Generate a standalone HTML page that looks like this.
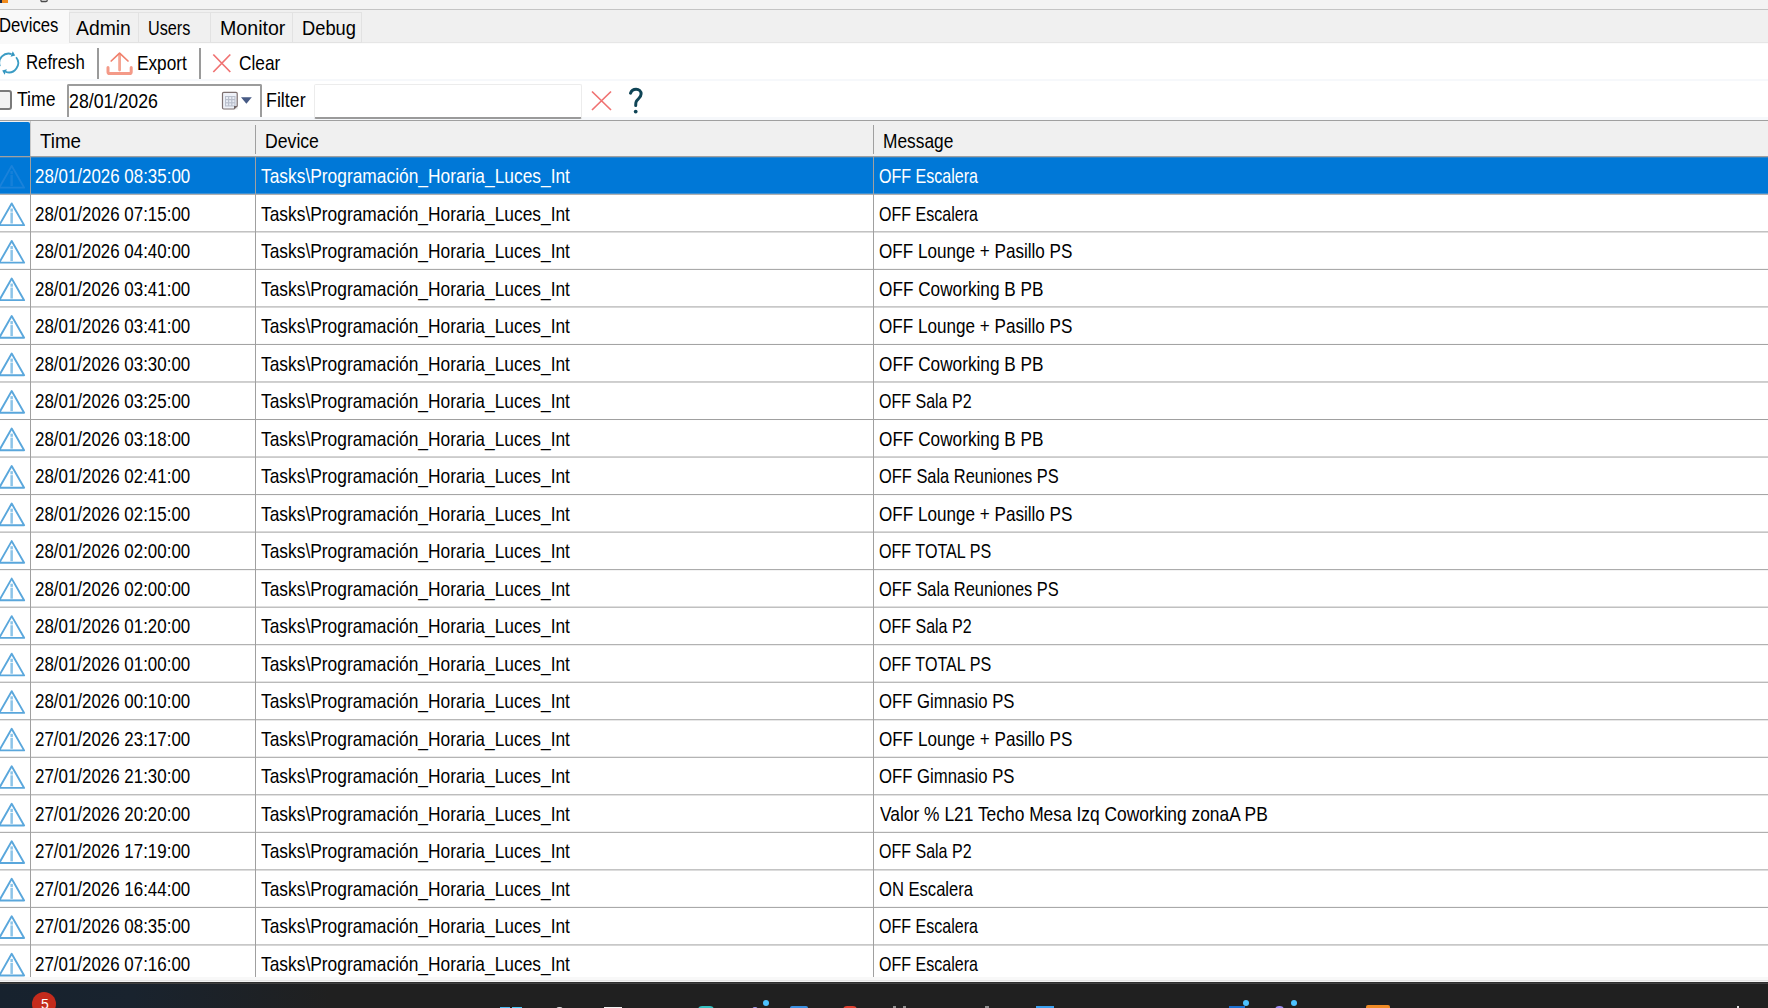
<!DOCTYPE html>
<html><head><meta charset="utf-8"><style>
html,body{margin:0;padding:0;width:1768px;height:1008px;overflow:hidden;background:#fff;position:relative}
.t{position:absolute;font-family:"Liberation Sans",sans-serif;font-size:19px;line-height:30px;white-space:pre;transform-origin:0 0}
</style></head><body>
<div style="position:absolute;left:0px;top:0px;width:1768px;height:9px;background:#f3f3f3;"></div>
<div style="position:absolute;left:0px;top:0px;width:2px;height:3px;background:#1c2840;"></div>
<div style="position:absolute;left:2px;top:0px;width:6px;height:3px;background:#f08a1c;"></div>
<svg style="position:absolute;left:0;top:0" width="60" height="6" viewBox="0 0 60 6"><path d="M40.9,-3 L40.9,0.2 Q40.9,1.5 42.2,1.5 L45.9,1.5 Q47.2,1.5 47.2,0.2 L47.2,-3" fill="none" stroke="#4a4a4a" stroke-width="1.3"/></svg>
<div style="position:absolute;left:0px;top:9px;width:1768px;height:1px;background:#c4c4c4;"></div>
<div style="position:absolute;left:0px;top:10px;width:1768px;height:33px;background:#f0f0f0;"></div>
<div style="position:absolute;left:0px;top:42px;width:1768px;height:1px;background:#e6e6e6;"></div>
<div style="position:absolute;left:0px;top:43px;width:1768px;height:1px;background:#fbfbfb;"></div>
<div style="position:absolute;left:0px;top:10px;width:69px;height:34px;background:#f9f9f9;"></div>
<div style="position:absolute;left:69px;top:12px;width:68px;height:29px;border:1px solid #e2e2e2;background:#f0f0f0"></div>
<div style="position:absolute;left:138px;top:12px;width:71px;height:29px;border:1px solid #e2e2e2;background:#f0f0f0"></div>
<div style="position:absolute;left:210px;top:12px;width:81px;height:29px;border:1px solid #e2e2e2;background:#f0f0f0"></div>
<div style="position:absolute;left:292px;top:12px;width:68px;height:29px;border:1px solid #e2e2e2;background:#f0f0f0"></div>
<div style="position:absolute;left:0px;top:44px;width:1768px;height:76px;background:#ffffff;"></div>
<div style="position:absolute;left:0px;top:79px;width:1768px;height:2px;background:#f6f8fb;"></div>
<div style="position:absolute;left:0px;top:117px;width:1768px;height:3px;background:#f6f8fb;"></div>
<div style="position:absolute;left:0px;top:120px;width:1768px;height:1px;background:#a0a0a0;"></div>
<div class="t" style="left:-0.88px;top:8.98px;color:#000;transform:scale(0.8788,1.077)">Devices</div>
<div class="t" style="left:76.00px;top:11.98px;color:#000;transform:scale(1.0189,1.077)">Admin</div>
<div class="t" style="left:148.15px;top:11.98px;color:#000;transform:scale(0.8542,1.077)">Users</div>
<div class="t" style="left:219.97px;top:11.98px;color:#000;transform:scale(1.0323,1.077)">Monitor</div>
<div class="t" style="left:302.04px;top:11.98px;color:#000;transform:scale(0.9630,1.077)">Debug</div>
<div class="t" style="left:26.12px;top:45.98px;color:#000;transform:scale(0.8831,1.077)">Refresh</div>
<div class="t" style="left:137.09px;top:46.98px;color:#000;transform:scale(0.9074,1.077)">Export</div>
<div class="t" style="left:239.09px;top:46.98px;color:#000;transform:scale(0.9091,1.077)">Clear</div>
<div style="position:absolute;left:97px;top:48px;width:2px;height:31px;background:#9a9a9a;"></div>
<div style="position:absolute;left:199px;top:48px;width:2px;height:31px;background:#9a9a9a;"></div>
<svg style="position:absolute;left:0;top:0" width="30" height="90" viewBox="0 0 30 90">
<path d="M-0.13,66.21 A9.4,9.4 0 0 1 11.60,54.06" fill="none" stroke="#3a9cc4" stroke-width="1.8"/>
<path d="M16.11,57.21 A9.4,9.4 0 0 1 5.80,71.94" fill="none" stroke="#3a9cc4" stroke-width="1.8"/>
<path d="M15.19,55.48 L12.79,51.28 L10.54,56.84 Z" fill="#3496c0"/>
<path d="M2.21,70.52 L4.61,74.72 L6.86,69.16 Z" fill="#3496c0"/>
</svg>
<svg style="position:absolute;left:100px;top:45px" width="40" height="35" viewBox="100 45 40 35">
<path d="M119.6,70 L119.6,54.5" stroke="#f4a594" stroke-width="2.8" stroke-linecap="round" fill="none"/>
<path d="M111.2,61 L119.6,53.2 L128,61" stroke="#f0806c" stroke-width="1.7" stroke-linecap="round" stroke-linejoin="round" fill="none"/>
<path d="M108,67.5 L108,72 Q108,73.6 109.6,73.6 L129.6,73.6 Q131.2,73.6 131.2,72 L131.2,67.5" stroke="#f49a88" stroke-width="3" stroke-linecap="round" fill="none"/>
</svg>
<svg style="position:absolute;left:205px;top:48px" width="35" height="32" viewBox="205 48 35 32">
<path d="M213.3,54.5 L230.3,72 M230.3,54.5 L213.3,72" stroke="#f07272" stroke-width="1.7" fill="none"/>
</svg>
<div style="position:absolute;left:-8px;top:90px;width:16px;height:16px;border:2px solid #7a7a7a;border-radius:3px;background:#f2f2f2"></div>
<div class="t" style="left:17.00px;top:82.98px;color:#000;transform:scale(0.9268,1.077)">Time</div>
<div style="position:absolute;left:67px;top:84px;width:191px;height:31px;border:2px solid #9c9c9c;border-bottom:none;border-radius:2px 2px 0 0;background:#fff"></div>
<div class="t" style="left:69.06px;top:84.98px;color:#000;transform:scale(0.9355,1.077)">28/01/2026</div>
<svg style="position:absolute;left:215px;top:84px" width="45" height="34" viewBox="215 84 45 34">
<rect x="223" y="93.5" width="15" height="16" rx="1.5" fill="#c8c8c8" opacity="0.35"/>
<path d="M222.5,93.5 Q222.5,92.3 223.7,92.3 L236,92.3 Q237.2,92.3 237.2,93.5 L237.2,106 L234,109 L223.7,109 Q222.5,109 222.5,107.8 Z" fill="#eef1f8" stroke="#7d7070" stroke-width="1.2"/>
<rect x="225" y="96" width="10.5" height="10.5" fill="#b9bfcc"/>
<g fill="#e8ecf4">
<rect x="226" y="97" width="2" height="2"/><rect x="229.2" y="97" width="2" height="2"/><rect x="232.4" y="97" width="2" height="2"/>
<rect x="226" y="100.2" width="2" height="2"/><rect x="229.2" y="100.2" width="2" height="2"/><rect x="232.4" y="100.2" width="2" height="2"/>
<rect x="226" y="103.4" width="2" height="2"/><rect x="229.2" y="103.4" width="2" height="2"/><rect x="232.4" y="103.4" width="2" height="2"/>
</g>
<path d="M234,109 L237.2,106 L234,106 Z" fill="#6f6666"/>
<path d="M241,97.3 L251.8,97.3 L246.4,103.8 Z" fill="#465a85"/>
</svg>
<div class="t" style="left:266.06px;top:83.98px;color:#000;transform:scale(0.9390,1.077)">Filter</div>
<div style="position:absolute;left:314px;top:84px;width:266px;height:32px;border:1px solid #ececec;border-bottom:2px solid #9a9a9a;border-radius:2px;background:#fff"></div>
<svg style="position:absolute;left:585px;top:82px" width="70" height="36" viewBox="585 82 70 36">
<path d="M592,91.5 L611,110 M611,91.5 L592,110" stroke="#f07272" stroke-width="1.7" fill="none"/>
<path d="M630.5,93.2 C631.4,90.6 633.6,89.3 636.1,89.3 C639,89.3 641.1,91.4 641.1,94.1 C641.1,97.6 637.6,99 636.3,101.4 C635.8,102.4 635.7,103.8 635.7,105.4" stroke="#0f4456" stroke-width="3" stroke-linecap="round" fill="none"/>
<circle cx="635.7" cy="111.6" r="1.9" fill="#0f4456"/>
</svg>
<div style="position:absolute;left:0px;top:121px;width:1768px;height:35px;background:#f0f0f0;"></div>
<div style="position:absolute;left:0;top:122px;width:30px;height:34px;background:#0078d7;border-top-right-radius:2px"></div>
<div style="position:absolute;left:30px;top:121px;width:1px;height:35px;background:#c8c8c8;"></div>
<div style="position:absolute;left:255px;top:125px;width:1px;height:29px;background:#a0a0a0;"></div>
<div style="position:absolute;left:873px;top:125px;width:1px;height:29px;background:#a0a0a0;"></div>
<div style="position:absolute;left:0px;top:156px;width:1768px;height:1px;background:#a0a0a0;"></div>
<div class="t" style="left:40.00px;top:124.98px;color:#000;transform:scale(0.9878,1.077)">Time</div>
<div class="t" style="left:265.07px;top:124.98px;color:#000;transform:scale(0.9286,1.077)">Device</div>
<div class="t" style="left:883.09px;top:124.98px;color:#000;transform:scale(0.9133,1.077)">Message</div>
<div style="position:absolute;left:0px;top:157px;width:1768px;height:1px;background:#a0a0a0;"></div>
<svg style="position:absolute;left:0;top:0" width="1768" height="1008" viewBox="0 0 1768 1008">
<rect x="0" y="157.3" width="1768" height="36.53" fill="#0078d7"/>
<rect x="0" y="193.83" width="1768" height="1" fill="#a0a0a0"/>
<rect x="0" y="231.36" width="1768" height="1" fill="#a0a0a0"/>
<rect x="0" y="268.89" width="1768" height="1" fill="#a0a0a0"/>
<rect x="0" y="306.42" width="1768" height="1" fill="#a0a0a0"/>
<rect x="0" y="343.95" width="1768" height="1" fill="#a0a0a0"/>
<rect x="0" y="381.48" width="1768" height="1" fill="#a0a0a0"/>
<rect x="0" y="419.01" width="1768" height="1" fill="#a0a0a0"/>
<rect x="0" y="456.54" width="1768" height="1" fill="#a0a0a0"/>
<rect x="0" y="494.07" width="1768" height="1" fill="#a0a0a0"/>
<rect x="0" y="531.60" width="1768" height="1" fill="#a0a0a0"/>
<rect x="0" y="569.13" width="1768" height="1" fill="#a0a0a0"/>
<rect x="0" y="606.66" width="1768" height="1" fill="#a0a0a0"/>
<rect x="0" y="644.19" width="1768" height="1" fill="#a0a0a0"/>
<rect x="0" y="681.72" width="1768" height="1" fill="#a0a0a0"/>
<rect x="0" y="719.25" width="1768" height="1" fill="#a0a0a0"/>
<rect x="0" y="756.78" width="1768" height="1" fill="#a0a0a0"/>
<rect x="0" y="794.31" width="1768" height="1" fill="#a0a0a0"/>
<rect x="0" y="831.84" width="1768" height="1" fill="#a0a0a0"/>
<rect x="0" y="869.37" width="1768" height="1" fill="#a0a0a0"/>
<rect x="0" y="906.90" width="1768" height="1" fill="#a0a0a0"/>
<rect x="0" y="944.43" width="1768" height="1" fill="#a0a0a0"/>
</svg>
<div style="position:absolute;left:30px;top:157px;width:1px;height:820px;background:#a0a0a0;"></div>
<div style="position:absolute;left:255px;top:157px;width:1px;height:820px;background:#a0a0a0;"></div>
<div style="position:absolute;left:873px;top:157px;width:1px;height:820px;background:#a0a0a0;"></div>
<svg style="position:absolute;left:0;top:0;overflow:visible" width="1" height="1" viewBox="0 0 1 1">
<g transform="translate(0,157.00)">
<path d="M11.7,8.9 L24.1,30.6 L-0.7,30.6 Z" fill="none" stroke="#1a82da" stroke-width="1.9" stroke-linejoin="round"/>
<rect x="10.4" y="14" width="2.5" height="3.2" fill="#1580d9"/><rect x="10.4" y="18" width="2.5" height="11" fill="#1580d9"/>
</g></svg>
<div class="t" style="left:35.11px;top:159.98px;color:#fff;transform:scale(0.8902,1.077)">28/01/2026 08:35:00</div>
<div class="t" style="left:261.00px;top:159.98px;color:#fff;transform:scale(0.9142,1.077)">Tasks\Programación_Horaria_Luces_Int</div>
<div class="t" style="left:879.16px;top:159.98px;color:#fff;transform:scale(0.8448,1.077)">OFF Escalera</div>
<svg style="position:absolute;left:0;top:0;overflow:visible" width="1" height="1" viewBox="0 0 1 1">
<g transform="translate(0,194.52)">
<path d="M11.7,8.9 L24.1,30.6 L-0.7,30.6 Z" fill="none" stroke="#5aa7dc" stroke-width="1.9" stroke-linejoin="round"/>
<rect x="10.4" y="14" width="2.5" height="3.2" fill="#8cc4e8"/><rect x="10.4" y="18" width="2.5" height="11" fill="#8cc4e8"/>
</g></svg>
<div class="t" style="left:35.11px;top:197.98px;color:#000;transform:scale(0.8902,1.077)">28/01/2026 07:15:00</div>
<div class="t" style="left:261.00px;top:197.98px;color:#000;transform:scale(0.9142,1.077)">Tasks\Programación_Horaria_Luces_Int</div>
<div class="t" style="left:879.16px;top:197.98px;color:#000;transform:scale(0.8448,1.077)">OFF Escalera</div>
<svg style="position:absolute;left:0;top:0;overflow:visible" width="1" height="1" viewBox="0 0 1 1">
<g transform="translate(0,232.04)">
<path d="M11.7,8.9 L24.1,30.6 L-0.7,30.6 Z" fill="none" stroke="#5aa7dc" stroke-width="1.9" stroke-linejoin="round"/>
<rect x="10.4" y="14" width="2.5" height="3.2" fill="#8cc4e8"/><rect x="10.4" y="18" width="2.5" height="11" fill="#8cc4e8"/>
</g></svg>
<div class="t" style="left:35.11px;top:234.98px;color:#000;transform:scale(0.8902,1.077)">28/01/2026 04:40:00</div>
<div class="t" style="left:261.00px;top:234.98px;color:#000;transform:scale(0.9142,1.077)">Tasks\Programación_Horaria_Luces_Int</div>
<div class="t" style="left:879.10px;top:234.98px;color:#000;transform:scale(0.9000,1.077)">OFF Lounge + Pasillo PS</div>
<svg style="position:absolute;left:0;top:0;overflow:visible" width="1" height="1" viewBox="0 0 1 1">
<g transform="translate(0,269.56)">
<path d="M11.7,8.9 L24.1,30.6 L-0.7,30.6 Z" fill="none" stroke="#5aa7dc" stroke-width="1.9" stroke-linejoin="round"/>
<rect x="10.4" y="14" width="2.5" height="3.2" fill="#8cc4e8"/><rect x="10.4" y="18" width="2.5" height="11" fill="#8cc4e8"/>
</g></svg>
<div class="t" style="left:35.11px;top:272.98px;color:#000;transform:scale(0.8902,1.077)">28/01/2026 03:41:00</div>
<div class="t" style="left:261.00px;top:272.98px;color:#000;transform:scale(0.9142,1.077)">Tasks\Programación_Horaria_Luces_Int</div>
<div class="t" style="left:879.09px;top:272.98px;color:#000;transform:scale(0.9056,1.077)">OFF Coworking B PB</div>
<svg style="position:absolute;left:0;top:0;overflow:visible" width="1" height="1" viewBox="0 0 1 1">
<g transform="translate(0,307.08)">
<path d="M11.7,8.9 L24.1,30.6 L-0.7,30.6 Z" fill="none" stroke="#5aa7dc" stroke-width="1.9" stroke-linejoin="round"/>
<rect x="10.4" y="14" width="2.5" height="3.2" fill="#8cc4e8"/><rect x="10.4" y="18" width="2.5" height="11" fill="#8cc4e8"/>
</g></svg>
<div class="t" style="left:35.11px;top:309.98px;color:#000;transform:scale(0.8902,1.077)">28/01/2026 03:41:00</div>
<div class="t" style="left:261.00px;top:309.98px;color:#000;transform:scale(0.9142,1.077)">Tasks\Programación_Horaria_Luces_Int</div>
<div class="t" style="left:879.10px;top:309.98px;color:#000;transform:scale(0.9000,1.077)">OFF Lounge + Pasillo PS</div>
<svg style="position:absolute;left:0;top:0;overflow:visible" width="1" height="1" viewBox="0 0 1 1">
<g transform="translate(0,344.60)">
<path d="M11.7,8.9 L24.1,30.6 L-0.7,30.6 Z" fill="none" stroke="#5aa7dc" stroke-width="1.9" stroke-linejoin="round"/>
<rect x="10.4" y="14" width="2.5" height="3.2" fill="#8cc4e8"/><rect x="10.4" y="18" width="2.5" height="11" fill="#8cc4e8"/>
</g></svg>
<div class="t" style="left:35.11px;top:347.98px;color:#000;transform:scale(0.8902,1.077)">28/01/2026 03:30:00</div>
<div class="t" style="left:261.00px;top:347.98px;color:#000;transform:scale(0.9142,1.077)">Tasks\Programación_Horaria_Luces_Int</div>
<div class="t" style="left:879.09px;top:347.98px;color:#000;transform:scale(0.9056,1.077)">OFF Coworking B PB</div>
<svg style="position:absolute;left:0;top:0;overflow:visible" width="1" height="1" viewBox="0 0 1 1">
<g transform="translate(0,382.12)">
<path d="M11.7,8.9 L24.1,30.6 L-0.7,30.6 Z" fill="none" stroke="#5aa7dc" stroke-width="1.9" stroke-linejoin="round"/>
<rect x="10.4" y="14" width="2.5" height="3.2" fill="#8cc4e8"/><rect x="10.4" y="18" width="2.5" height="11" fill="#8cc4e8"/>
</g></svg>
<div class="t" style="left:35.11px;top:384.98px;color:#000;transform:scale(0.8902,1.077)">28/01/2026 03:25:00</div>
<div class="t" style="left:261.00px;top:384.98px;color:#000;transform:scale(0.9142,1.077)">Tasks\Programación_Horaria_Luces_Int</div>
<div class="t" style="left:879.16px;top:384.98px;color:#000;transform:scale(0.8426,1.077)">OFF Sala P2</div>
<svg style="position:absolute;left:0;top:0;overflow:visible" width="1" height="1" viewBox="0 0 1 1">
<g transform="translate(0,419.64)">
<path d="M11.7,8.9 L24.1,30.6 L-0.7,30.6 Z" fill="none" stroke="#5aa7dc" stroke-width="1.9" stroke-linejoin="round"/>
<rect x="10.4" y="14" width="2.5" height="3.2" fill="#8cc4e8"/><rect x="10.4" y="18" width="2.5" height="11" fill="#8cc4e8"/>
</g></svg>
<div class="t" style="left:35.11px;top:422.98px;color:#000;transform:scale(0.8902,1.077)">28/01/2026 03:18:00</div>
<div class="t" style="left:261.00px;top:422.98px;color:#000;transform:scale(0.9142,1.077)">Tasks\Programación_Horaria_Luces_Int</div>
<div class="t" style="left:879.09px;top:422.98px;color:#000;transform:scale(0.9056,1.077)">OFF Coworking B PB</div>
<svg style="position:absolute;left:0;top:0;overflow:visible" width="1" height="1" viewBox="0 0 1 1">
<g transform="translate(0,457.16)">
<path d="M11.7,8.9 L24.1,30.6 L-0.7,30.6 Z" fill="none" stroke="#5aa7dc" stroke-width="1.9" stroke-linejoin="round"/>
<rect x="10.4" y="14" width="2.5" height="3.2" fill="#8cc4e8"/><rect x="10.4" y="18" width="2.5" height="11" fill="#8cc4e8"/>
</g></svg>
<div class="t" style="left:35.11px;top:459.98px;color:#000;transform:scale(0.8902,1.077)">28/01/2026 02:41:00</div>
<div class="t" style="left:261.00px;top:459.98px;color:#000;transform:scale(0.9142,1.077)">Tasks\Programación_Horaria_Luces_Int</div>
<div class="t" style="left:879.14px;top:459.98px;color:#000;transform:scale(0.8641,1.077)">OFF Sala Reuniones PS</div>
<svg style="position:absolute;left:0;top:0;overflow:visible" width="1" height="1" viewBox="0 0 1 1">
<g transform="translate(0,494.68)">
<path d="M11.7,8.9 L24.1,30.6 L-0.7,30.6 Z" fill="none" stroke="#5aa7dc" stroke-width="1.9" stroke-linejoin="round"/>
<rect x="10.4" y="14" width="2.5" height="3.2" fill="#8cc4e8"/><rect x="10.4" y="18" width="2.5" height="11" fill="#8cc4e8"/>
</g></svg>
<div class="t" style="left:35.11px;top:497.98px;color:#000;transform:scale(0.8902,1.077)">28/01/2026 02:15:00</div>
<div class="t" style="left:261.00px;top:497.98px;color:#000;transform:scale(0.9142,1.077)">Tasks\Programación_Horaria_Luces_Int</div>
<div class="t" style="left:879.10px;top:497.98px;color:#000;transform:scale(0.9000,1.077)">OFF Lounge + Pasillo PS</div>
<svg style="position:absolute;left:0;top:0;overflow:visible" width="1" height="1" viewBox="0 0 1 1">
<g transform="translate(0,532.20)">
<path d="M11.7,8.9 L24.1,30.6 L-0.7,30.6 Z" fill="none" stroke="#5aa7dc" stroke-width="1.9" stroke-linejoin="round"/>
<rect x="10.4" y="14" width="2.5" height="3.2" fill="#8cc4e8"/><rect x="10.4" y="18" width="2.5" height="11" fill="#8cc4e8"/>
</g></svg>
<div class="t" style="left:35.11px;top:534.98px;color:#000;transform:scale(0.8902,1.077)">28/01/2026 02:00:00</div>
<div class="t" style="left:261.00px;top:534.98px;color:#000;transform:scale(0.9142,1.077)">Tasks\Programación_Horaria_Luces_Int</div>
<div class="t" style="left:879.15px;top:534.98px;color:#000;transform:scale(0.8473,1.077)">OFF TOTAL PS</div>
<svg style="position:absolute;left:0;top:0;overflow:visible" width="1" height="1" viewBox="0 0 1 1">
<g transform="translate(0,569.72)">
<path d="M11.7,8.9 L24.1,30.6 L-0.7,30.6 Z" fill="none" stroke="#5aa7dc" stroke-width="1.9" stroke-linejoin="round"/>
<rect x="10.4" y="14" width="2.5" height="3.2" fill="#8cc4e8"/><rect x="10.4" y="18" width="2.5" height="11" fill="#8cc4e8"/>
</g></svg>
<div class="t" style="left:35.11px;top:572.98px;color:#000;transform:scale(0.8902,1.077)">28/01/2026 02:00:00</div>
<div class="t" style="left:261.00px;top:572.98px;color:#000;transform:scale(0.9142,1.077)">Tasks\Programación_Horaria_Luces_Int</div>
<div class="t" style="left:879.14px;top:572.98px;color:#000;transform:scale(0.8641,1.077)">OFF Sala Reuniones PS</div>
<svg style="position:absolute;left:0;top:0;overflow:visible" width="1" height="1" viewBox="0 0 1 1">
<g transform="translate(0,607.24)">
<path d="M11.7,8.9 L24.1,30.6 L-0.7,30.6 Z" fill="none" stroke="#5aa7dc" stroke-width="1.9" stroke-linejoin="round"/>
<rect x="10.4" y="14" width="2.5" height="3.2" fill="#8cc4e8"/><rect x="10.4" y="18" width="2.5" height="11" fill="#8cc4e8"/>
</g></svg>
<div class="t" style="left:35.11px;top:609.98px;color:#000;transform:scale(0.8902,1.077)">28/01/2026 01:20:00</div>
<div class="t" style="left:261.00px;top:609.98px;color:#000;transform:scale(0.9142,1.077)">Tasks\Programación_Horaria_Luces_Int</div>
<div class="t" style="left:879.16px;top:609.98px;color:#000;transform:scale(0.8426,1.077)">OFF Sala P2</div>
<svg style="position:absolute;left:0;top:0;overflow:visible" width="1" height="1" viewBox="0 0 1 1">
<g transform="translate(0,644.76)">
<path d="M11.7,8.9 L24.1,30.6 L-0.7,30.6 Z" fill="none" stroke="#5aa7dc" stroke-width="1.9" stroke-linejoin="round"/>
<rect x="10.4" y="14" width="2.5" height="3.2" fill="#8cc4e8"/><rect x="10.4" y="18" width="2.5" height="11" fill="#8cc4e8"/>
</g></svg>
<div class="t" style="left:35.11px;top:647.98px;color:#000;transform:scale(0.8902,1.077)">28/01/2026 01:00:00</div>
<div class="t" style="left:261.00px;top:647.98px;color:#000;transform:scale(0.9142,1.077)">Tasks\Programación_Horaria_Luces_Int</div>
<div class="t" style="left:879.15px;top:647.98px;color:#000;transform:scale(0.8473,1.077)">OFF TOTAL PS</div>
<svg style="position:absolute;left:0;top:0;overflow:visible" width="1" height="1" viewBox="0 0 1 1">
<g transform="translate(0,682.28)">
<path d="M11.7,8.9 L24.1,30.6 L-0.7,30.6 Z" fill="none" stroke="#5aa7dc" stroke-width="1.9" stroke-linejoin="round"/>
<rect x="10.4" y="14" width="2.5" height="3.2" fill="#8cc4e8"/><rect x="10.4" y="18" width="2.5" height="11" fill="#8cc4e8"/>
</g></svg>
<div class="t" style="left:35.11px;top:684.98px;color:#000;transform:scale(0.8902,1.077)">28/01/2026 00:10:00</div>
<div class="t" style="left:261.00px;top:684.98px;color:#000;transform:scale(0.9142,1.077)">Tasks\Programación_Horaria_Luces_Int</div>
<div class="t" style="left:879.12px;top:684.98px;color:#000;transform:scale(0.8791,1.077)">OFF Gimnasio PS</div>
<svg style="position:absolute;left:0;top:0;overflow:visible" width="1" height="1" viewBox="0 0 1 1">
<g transform="translate(0,719.80)">
<path d="M11.7,8.9 L24.1,30.6 L-0.7,30.6 Z" fill="none" stroke="#5aa7dc" stroke-width="1.9" stroke-linejoin="round"/>
<rect x="10.4" y="14" width="2.5" height="3.2" fill="#8cc4e8"/><rect x="10.4" y="18" width="2.5" height="11" fill="#8cc4e8"/>
</g></svg>
<div class="t" style="left:35.11px;top:722.98px;color:#000;transform:scale(0.8902,1.077)">27/01/2026 23:17:00</div>
<div class="t" style="left:261.00px;top:722.98px;color:#000;transform:scale(0.9142,1.077)">Tasks\Programación_Horaria_Luces_Int</div>
<div class="t" style="left:879.10px;top:722.98px;color:#000;transform:scale(0.9000,1.077)">OFF Lounge + Pasillo PS</div>
<svg style="position:absolute;left:0;top:0;overflow:visible" width="1" height="1" viewBox="0 0 1 1">
<g transform="translate(0,757.32)">
<path d="M11.7,8.9 L24.1,30.6 L-0.7,30.6 Z" fill="none" stroke="#5aa7dc" stroke-width="1.9" stroke-linejoin="round"/>
<rect x="10.4" y="14" width="2.5" height="3.2" fill="#8cc4e8"/><rect x="10.4" y="18" width="2.5" height="11" fill="#8cc4e8"/>
</g></svg>
<div class="t" style="left:35.11px;top:759.98px;color:#000;transform:scale(0.8902,1.077)">27/01/2026 21:30:00</div>
<div class="t" style="left:261.00px;top:759.98px;color:#000;transform:scale(0.9142,1.077)">Tasks\Programación_Horaria_Luces_Int</div>
<div class="t" style="left:879.12px;top:759.98px;color:#000;transform:scale(0.8791,1.077)">OFF Gimnasio PS</div>
<svg style="position:absolute;left:0;top:0;overflow:visible" width="1" height="1" viewBox="0 0 1 1">
<g transform="translate(0,794.84)">
<path d="M11.7,8.9 L24.1,30.6 L-0.7,30.6 Z" fill="none" stroke="#5aa7dc" stroke-width="1.9" stroke-linejoin="round"/>
<rect x="10.4" y="14" width="2.5" height="3.2" fill="#8cc4e8"/><rect x="10.4" y="18" width="2.5" height="11" fill="#8cc4e8"/>
</g></svg>
<div class="t" style="left:35.11px;top:797.98px;color:#000;transform:scale(0.8902,1.077)">27/01/2026 20:20:00</div>
<div class="t" style="left:261.00px;top:797.98px;color:#000;transform:scale(0.9142,1.077)">Tasks\Programación_Horaria_Luces_Int</div>
<div class="t" style="left:880.00px;top:797.98px;color:#000;transform:scale(0.9149,1.077)">Valor % L21 Techo Mesa Izq Coworking zonaA PB</div>
<svg style="position:absolute;left:0;top:0;overflow:visible" width="1" height="1" viewBox="0 0 1 1">
<g transform="translate(0,832.36)">
<path d="M11.7,8.9 L24.1,30.6 L-0.7,30.6 Z" fill="none" stroke="#5aa7dc" stroke-width="1.9" stroke-linejoin="round"/>
<rect x="10.4" y="14" width="2.5" height="3.2" fill="#8cc4e8"/><rect x="10.4" y="18" width="2.5" height="11" fill="#8cc4e8"/>
</g></svg>
<div class="t" style="left:35.11px;top:834.98px;color:#000;transform:scale(0.8902,1.077)">27/01/2026 17:19:00</div>
<div class="t" style="left:261.00px;top:834.98px;color:#000;transform:scale(0.9142,1.077)">Tasks\Programación_Horaria_Luces_Int</div>
<div class="t" style="left:879.16px;top:834.98px;color:#000;transform:scale(0.8426,1.077)">OFF Sala P2</div>
<svg style="position:absolute;left:0;top:0;overflow:visible" width="1" height="1" viewBox="0 0 1 1">
<g transform="translate(0,869.88)">
<path d="M11.7,8.9 L24.1,30.6 L-0.7,30.6 Z" fill="none" stroke="#5aa7dc" stroke-width="1.9" stroke-linejoin="round"/>
<rect x="10.4" y="14" width="2.5" height="3.2" fill="#8cc4e8"/><rect x="10.4" y="18" width="2.5" height="11" fill="#8cc4e8"/>
</g></svg>
<div class="t" style="left:35.11px;top:872.98px;color:#000;transform:scale(0.8902,1.077)">27/01/2026 16:44:00</div>
<div class="t" style="left:261.00px;top:872.98px;color:#000;transform:scale(0.9142,1.077)">Tasks\Programación_Horaria_Luces_Int</div>
<div class="t" style="left:879.13px;top:872.98px;color:#000;transform:scale(0.8729,1.077)">ON Escalera</div>
<svg style="position:absolute;left:0;top:0;overflow:visible" width="1" height="1" viewBox="0 0 1 1">
<g transform="translate(0,907.40)">
<path d="M11.7,8.9 L24.1,30.6 L-0.7,30.6 Z" fill="none" stroke="#5aa7dc" stroke-width="1.9" stroke-linejoin="round"/>
<rect x="10.4" y="14" width="2.5" height="3.2" fill="#8cc4e8"/><rect x="10.4" y="18" width="2.5" height="11" fill="#8cc4e8"/>
</g></svg>
<div class="t" style="left:35.11px;top:909.98px;color:#000;transform:scale(0.8902,1.077)">27/01/2026 08:35:00</div>
<div class="t" style="left:261.00px;top:909.98px;color:#000;transform:scale(0.9142,1.077)">Tasks\Programación_Horaria_Luces_Int</div>
<div class="t" style="left:879.16px;top:909.98px;color:#000;transform:scale(0.8448,1.077)">OFF Escalera</div>
<svg style="position:absolute;left:0;top:0;overflow:visible" width="1" height="1" viewBox="0 0 1 1">
<g transform="translate(0,944.92)">
<path d="M11.7,8.9 L24.1,30.6 L-0.7,30.6 Z" fill="none" stroke="#5aa7dc" stroke-width="1.9" stroke-linejoin="round"/>
<rect x="10.4" y="14" width="2.5" height="3.2" fill="#8cc4e8"/><rect x="10.4" y="18" width="2.5" height="11" fill="#8cc4e8"/>
</g></svg>
<div class="t" style="left:35.11px;top:947.98px;color:#000;transform:scale(0.8902,1.077)">27/01/2026 07:16:00</div>
<div class="t" style="left:261.00px;top:947.98px;color:#000;transform:scale(0.9142,1.077)">Tasks\Programación_Horaria_Luces_Int</div>
<div class="t" style="left:879.16px;top:947.98px;color:#000;transform:scale(0.8448,1.077)">OFF Escalera</div>
<div style="position:absolute;left:0px;top:977px;width:1768px;height:3px;background:#f8f8f8;"></div>
<div style="position:absolute;left:0px;top:980px;width:1768px;height:1px;background:#e4e4e4;"></div>
<div style="position:absolute;left:0px;top:981px;width:1768px;height:1px;background:#f4f4f4;"></div>
<div style="position:absolute;left:0px;top:982px;width:1768px;height:26px;background:#202020;"></div>
<div style="position:absolute;left:0;top:982px;width:330px;height:26px;background:linear-gradient(90deg,#17222e 0%,#19232e 40%,#202020 100%)"></div>
<div style="position:absolute;left:0px;top:982px;width:1768px;height:1px;background:#2e2e2e;"></div>
<div style="position:absolute;left:0px;top:983px;width:1768px;height:1px;background:#404040;"></div>
<div style="position:absolute;left:32px;top:992px;width:24px;height:24px;border-radius:50%;background:#c42b1c"></div>
<div style="position:absolute;left:41px;top:997px;font:14px 'Liberation Sans';color:#fff;line-height:14px">5</div>
<div style="position:absolute;left:500px;top:1007px;width:10px;height:7px;background:#49b8f0;border-radius:0px"></div>
<div style="position:absolute;left:512px;top:1007px;width:10px;height:7px;background:#49c8f8;border-radius:0px"></div>
<div style="position:absolute;left:556px;top:1007px;width:7px;height:7px;background:#d8d8d8;border-radius:3px"></div>
<div style="position:absolute;left:604px;top:1007px;width:18px;height:7px;background:#f0f0f0;border-radius:0px"></div>
<div style="position:absolute;left:698px;top:1006px;width:16px;height:8px;background:#35c0c0;border-radius:8px"></div>
<div style="position:absolute;left:752px;top:1007px;width:6px;height:7px;background:#a09ae8;border-radius:3px"></div>
<div style="position:absolute;left:763px;top:1000px;width:6px;height:6px;border-radius:50%;background:#4cc2ff"></div>
<div style="position:absolute;left:790px;top:1006px;width:18px;height:8px;background:#3a8fe0;border-radius:2px"></div>
<div style="position:absolute;left:843px;top:1006px;width:14px;height:8px;background:#e04030;border-radius:7px"></div>
<div style="position:absolute;left:893px;top:1006px;width:3px;height:8px;background:#909090;border-radius:0px"></div>
<div style="position:absolute;left:903px;top:1006px;width:3px;height:8px;background:#909090;border-radius:0px"></div>
<div style="position:absolute;left:985px;top:1006px;width:4px;height:8px;background:#909090;border-radius:0px"></div>
<div style="position:absolute;left:1036px;top:1006px;width:18px;height:8px;background:#3aa0f0;border-radius:0px"></div>
<div style="position:absolute;left:1229px;top:1006px;width:16px;height:8px;background:#1a6fd0;border-radius:0px"></div>
<div style="position:absolute;left:1243px;top:1000px;width:6px;height:6px;border-radius:50%;background:#4cc2ff"></div>
<div style="position:absolute;left:1275px;top:1006px;width:9px;height:8px;background:#9b8cf0;border-radius:4px"></div>
<div style="position:absolute;left:1291px;top:1000px;width:6px;height:6px;border-radius:50%;background:#4cc2ff"></div>
<div style="position:absolute;left:1366px;top:1005px;width:24px;height:9px;background:#f08a24;border-radius:2px"></div>
<div style="position:absolute;left:1737px;top:1006px;width:2px;height:8px;background:#e0e0e0;border-radius:0px"></div>
</body></html>
